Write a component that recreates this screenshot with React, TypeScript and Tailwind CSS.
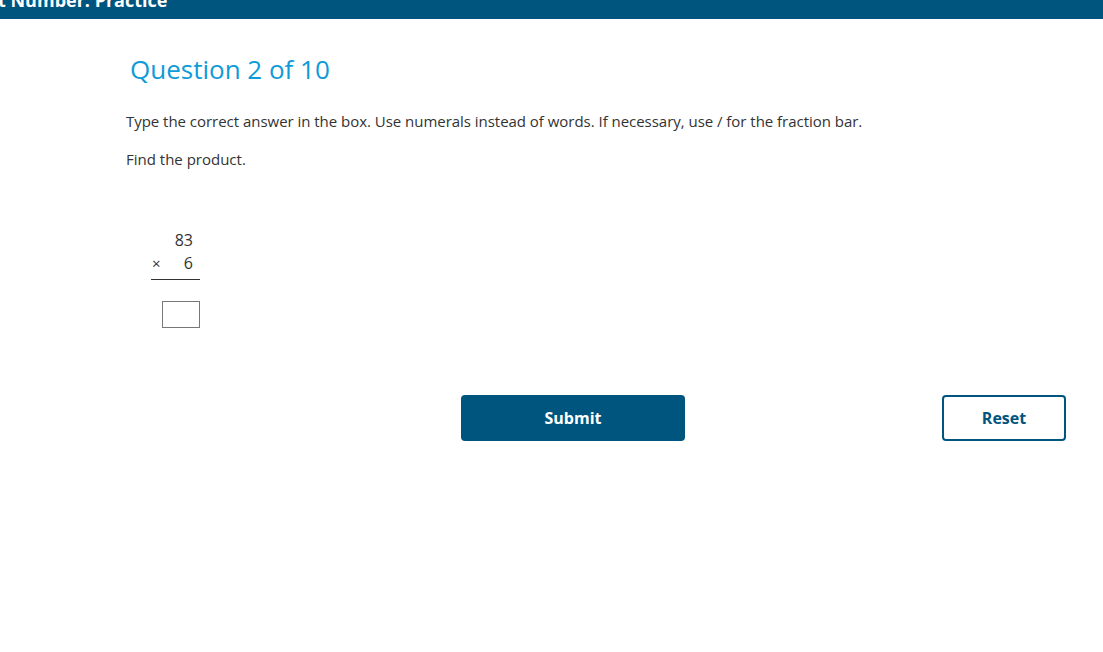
import React from "react";

export default function App() {
  return (
    <div className="w-[1103px] h-[652px] bg-white overflow-hidden" style={{ fontFamily: '"Open Sans", sans-serif' }}>
      <div className="h-[19px] bg-[#00557f] overflow-hidden">
        <div className="text-white font-bold text-[18px] leading-[18px] -mt-[9px] -ml-[2px] whitespace-nowrap">t Number: Practice</div>
      </div>
      <div className="pl-[126px] pt-[32px]">
        <h1 className="text-[#0e9bd8] text-[26px] leading-[36px] ml-[4px]">Question 2 of 10</h1>
        <p className="text-[#333333] text-[15px] leading-[20px] mt-[24px] tracking-[-0.03px]">
          Type the correct answer in the box. Use numerals instead of words. If necessary, use / for the fraction bar.
        </p>
        <p className="text-[#333333] text-[15px] leading-[20px] mt-[18px]">Find the product.</p>
        <div className="mt-[60px] ml-[25px] w-[49px] text-[#333333] text-[16px]">
          <div className="flex justify-end pr-[7px] leading-[22px]">83</div>
          <div className="flex justify-between items-center pr-[7px] leading-[24px]">
            <span className="text-[15px] ml-[1px]">×</span>
            <span>6</span>
          </div>
          <div className="mt-[4px] h-px bg-[#333333]" />
          <div className="mt-[21px] ml-[11px] w-[38px] h-[27px] border border-[#777777] bg-white" />
        </div>
        <div className="mt-[67px] flex">
          <button className="ml-[335px] w-[224px] h-[46px] rounded-[4px] bg-[#00557f] text-white font-bold text-[16px]">Submit</button>
          <button className="ml-[257px] w-[124px] h-[46px] rounded-[4px] border-2 border-[#00557f] bg-white text-[#00557f] font-bold text-[16px]">Reset</button>
        </div>
      </div>
    </div>
  );
}
